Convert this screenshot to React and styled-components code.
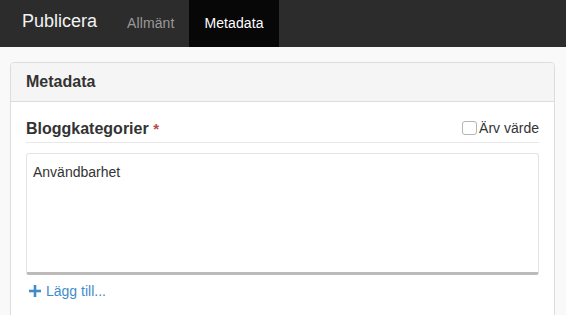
import React from "react";
import styled, { createGlobalStyle } from "styled-components";

const GlobalStyle = createGlobalStyle`
  html, body {
    margin: 0;
    padding: 0;
    overflow: hidden;
    background: #f9f9f9;
    font-family: "Liberation Sans", Arial, Helvetica, sans-serif;
    color: #333;
  }
  * { box-sizing: border-box; }
`;

const Navbar = styled.nav`
  display: flex;
  align-items: stretch;
  height: 47px;
  background: #2c2c2c;
  padding-left: 7px;
`;

const Brand = styled.a`
  display: block;
  padding: 11px 15px 0;
  font-size: 18px;
  line-height: 20px;
  color: #f2f2f2;
  text-decoration: none;
`;

const NavTab = styled.a`
  display: block;
  padding: 13px 15px 0 15px;
  font-size: 14px;
  line-height: 20px;
  color: ${(p) => (p.$active ? "#ffffff" : "#999999")};
  background: ${(p) => (p.$active ? "#070707" : "transparent")};
  text-decoration: none;
  letter-spacing: 0.1px;
`;

const Main = styled.main`
  padding: 15px 11px 0 10px;
`;

const Panel = styled.section`
  background: #fff;
  border: 1px solid #dddddd;
  border-radius: 4px;
`;

const PanelHeading = styled.header`
  padding: 8px 15px;
  background: #f5f5f5;
  border-bottom: 1px solid #dddddd;
  border-radius: 3px 3px 0 0;
  font-size: 16px;
  line-height: 22px;
  font-weight: bold;
  color: #333;
`;

const PanelBody = styled.div`
  padding: 15px 15px 20px;
`;

const FieldHeader = styled.div`
  display: flex;
  align-items: center;
  justify-content: space-between;
  padding-bottom: 2px;
  border-bottom: 1px solid #e8e8e8;
  margin-bottom: 10px;
`;

const FieldLabel = styled.label`
  font-size: 16px;
  line-height: 23px;
  font-weight: bold;
  color: #333;
`;

const Required = styled.span`
  color: #b94a48;
  font-size: 15px;
`;

const InheritToggle = styled.label`
  display: flex;
  align-items: center;
  gap: 2px;
  font-size: 14px;
  line-height: 20px;
  color: #333;
  margin-top: -1px;
`;

const Checkbox = styled.span`
  display: inline-block;
  width: 15px;
  height: 14px;
  border: 1px solid #b5b5b5;
  border-radius: 3px;
  background: #fff;
`;

const ListBox = styled.div`
  height: 122px;
  padding: 8px 6px;
  border: 1px solid #e4e4e4;
  border-bottom: 3px solid #bbbbbb;
  border-radius: 3px;
  background: #fff;
`;

const ListItem = styled.div`
  font-size: 14px;
  line-height: 20px;
  color: #333;
`;

const AddLink = styled.a`
  display: inline-flex;
  align-items: center;
  gap: 5px;
  margin: 6px 0 0 3px;
  font-size: 14px;
  line-height: 20px;
  color: #428bca;
  text-decoration: none;
  cursor: pointer;
`;

const PlusIcon = () => (
  <svg width="12" height="12" viewBox="0 0 12 12" aria-hidden="true">
    <rect x="4.7" y="0" width="2.6" height="12" fill="#428bca" />
    <rect x="0" y="4.7" width="12" height="2.6" fill="#428bca" />
  </svg>
);

export default function App() {
  return (
    <>
      <GlobalStyle />
      <Navbar>
        <Brand>Publicera</Brand>
        <NavTab>Allmänt</NavTab>
        <NavTab $active>Metadata</NavTab>
      </Navbar>
      <Main>
        <Panel>
          <PanelHeading>Metadata</PanelHeading>
          <PanelBody>
            <FieldHeader>
              <FieldLabel>
                Bloggkategorier <Required>*</Required>
              </FieldLabel>
              <InheritToggle>
                <Checkbox />
                Ärv värde
              </InheritToggle>
            </FieldHeader>
            <ListBox>
              <ListItem>Användbarhet</ListItem>
            </ListBox>
            <AddLink>
              <PlusIcon />
              Lägg till...
            </AddLink>
          </PanelBody>
        </Panel>
      </Main>
    </>
  );
}
